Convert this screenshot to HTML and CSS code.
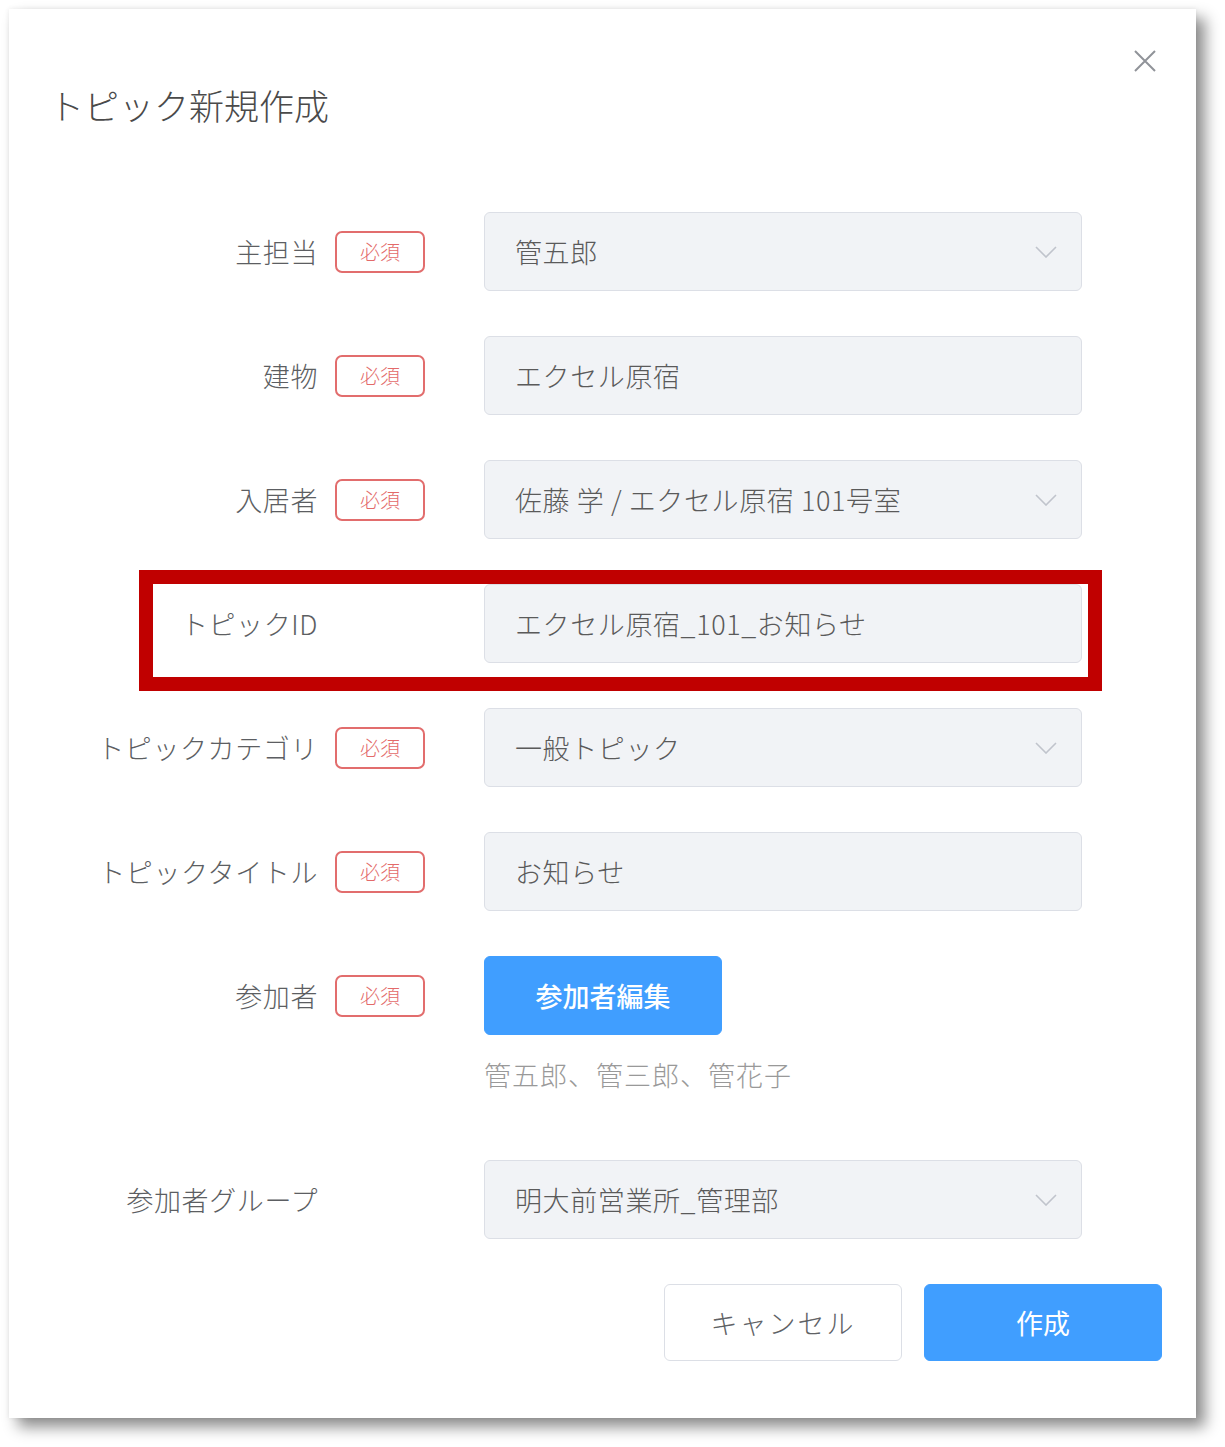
FILE: index.html
```html
<!DOCTYPE html>
<html lang="ja">
<head>
<meta charset="utf-8">
<title>トピック新規作成</title>
<link rel="stylesheet" href="styles.css">
</head>
<body>
<div class="dialog">
  <div class="dialog-header">
    <h1 class="title">トピック新規作成</h1>
    <button class="close" aria-label="close">
      <svg viewBox="0 0 22 22" width="22" height="22"><path d="M1 1 L21 21 M21 1 L1 21" stroke="#909399" stroke-width="2" fill="none"/></svg>
    </button>
  </div>
  <div class="form">
    <div class="row">
      <div class="label-cell"><span class="label">主担当</span><span class="badge">必須</span></div>
      <div class="field select"><span class="value">管五郎</span><svg class="chev" viewBox="0 0 22 12" width="22" height="12"><path d="M1 1 L11 11 L21 1" stroke="#c0c4cc" stroke-width="1.6" fill="none"/></svg></div>
    </div>
    <div class="row">
      <div class="label-cell"><span class="label">建物</span><span class="badge">必須</span></div>
      <div class="field"><span class="value">エクセル原宿</span></div>
    </div>
    <div class="row">
      <div class="label-cell"><span class="label">入居者</span><span class="badge">必須</span></div>
      <div class="field select"><span class="value">佐藤 学 / エクセル原宿 101号室</span><svg class="chev" viewBox="0 0 22 12" width="22" height="12"><path d="M1 1 L11 11 L21 1" stroke="#c0c4cc" stroke-width="1.6" fill="none"/></svg></div>
    </div>
    <div class="row highlighted">
      <div class="label-cell"><span class="label">トピックID</span><span class="badge-slot"></span></div>
      <div class="field"><span class="value">エクセル原宿_101_お知らせ</span></div>
      <div class="annotation"></div>
    </div>
    <div class="row">
      <div class="label-cell"><span class="label">トピックカテゴリ</span><span class="badge">必須</span></div>
      <div class="field select"><span class="value">一般トピック</span><svg class="chev" viewBox="0 0 22 12" width="22" height="12"><path d="M1 1 L11 11 L21 1" stroke="#c0c4cc" stroke-width="1.6" fill="none"/></svg></div>
    </div>
    <div class="row">
      <div class="label-cell"><span class="label">トピックタイトル</span><span class="badge">必須</span></div>
      <div class="field"><span class="value">お知らせ</span></div>
    </div>
    <div class="row participants">
      <div class="label-cell"><span class="label">参加者</span><span class="badge">必須</span></div>
      <div class="participants-body">
        <button class="btn primary edit">参加者編集</button>
        <div class="names">管五郎、管三郎、管花子</div>
      </div>
    </div>
    <div class="row group">
      <div class="label-cell"><span class="label">参加者グループ</span><span class="badge-slot"></span></div>
      <div class="field select"><span class="value">明大前営業所_管理部</span><svg class="chev" viewBox="0 0 22 12" width="22" height="12"><path d="M1 1 L11 11 L21 1" stroke="#c0c4cc" stroke-width="1.6" fill="none"/></svg></div>
    </div>
  </div>
  <div class="footer">
    <button class="btn default">キャンセル</button>
    <button class="btn primary">作成</button>
  </div>
</div>
</body>
</html>
```
FILE: styles.css
```css
* { box-sizing: border-box; }
html, body {
  margin: 0;
  padding: 0;
  background: #ffffff;
  font-family: "Noto Sans CJK JP", "Noto Sans", sans-serif;
}
body {
  padding: 9px 0 29px 9px;
}
.dialog {
  position: relative;
  width: 1187px;
  height: 1409px;
  background: #ffffff;
  box-shadow: 9px 9px 14px rgba(0, 0, 0, 0.45), 0 0 5px rgba(0, 0, 0, 0.08);
}
.dialog-header {
  padding: 78px 0 0 40px;
}
.title {
  margin: 0;
  font-size: 35px;
  line-height: 35px;
  font-weight: 300;
  color: #4a4a4a;
}
.close {
  position: absolute;
  top: 41px;
  right: 40px;
  width: 22px;
  height: 22px;
  padding: 0;
  border: 0;
  background: none;
  line-height: 0;
}
.form {
  margin-top: 90px;
  display: flex;
  flex-direction: column;
  gap: 45px;
}
.row {
  position: relative;
  display: flex;
  align-items: center;
}
.label-cell {
  width: 475px;
  padding-right: 59px;
  display: flex;
  justify-content: flex-end;
  align-items: center;
}
.label {
  font-size: 27px;
  line-height: 40px;
  color: #5c5e62;
  font-weight: 300;
  letter-spacing: 0.6px;
}
.badge, .badge-slot {
  margin-left: 17px;
  width: 90px;
  height: 42px;
  flex: none;
}
.badge {
  display: flex;
  align-items: center;
  justify-content: center;
  border: 2px solid #e26d6d;
  border-radius: 7px;
  color: #e36a6a;
  font-size: 20px;
  font-weight: 300;
}
.field {
  width: 598px;
  height: 79px;
  display: flex;
  align-items: center;
  justify-content: space-between;
  padding: 0 24px 0 30px;
  background: #f1f3f6;
  border: 1px solid #dcdfe6;
  border-radius: 6px;
}
.value {
  font-size: 27px;
  color: #5a5a5a;
  font-weight: 300;
  white-space: nowrap;
  letter-spacing: 0.6px;
}
.chev { flex: none; }
.annotation {
  position: absolute;
  left: 130px;
  top: -14px;
  width: 963px;
  height: 121px;
  border: 14px solid #c00000;
  pointer-events: none;
}
.participants {
  align-items: flex-start;
}
.participants .label-cell {
  height: 79px;
}
.participants-body {
  display: flex;
  flex-direction: column;
  align-items: flex-start;
}
.btn {
  width: 238px;
  height: 78px;
  border-radius: 6px;
  font-family: inherit;
  font-size: 27px;
  padding: 0;
  cursor: pointer;
}
.btn.primary {
  background: #409eff;
  border: 1px solid #409eff;
  color: #ffffff;
}
.btn.default {
  background: #ffffff;
  border: 1px solid #dcdfe6;
  color: #606266;
  font-weight: 300;
  letter-spacing: 2px;
}
.edit {
  height: 79px;
  font-weight: 500;
}
.names {
  margin-top: 22px;
  font-size: 27px;
  line-height: 36px;
  color: #999999;
  font-weight: 300;
  letter-spacing: 1px;
}
.group {
  margin-top: 22px;
}
.footer {
  margin-top: 45px;
  display: flex;
  justify-content: flex-end;
  gap: 22px;
  padding-right: 34px;
}
.footer .btn {
  height: 77px;
}
```
